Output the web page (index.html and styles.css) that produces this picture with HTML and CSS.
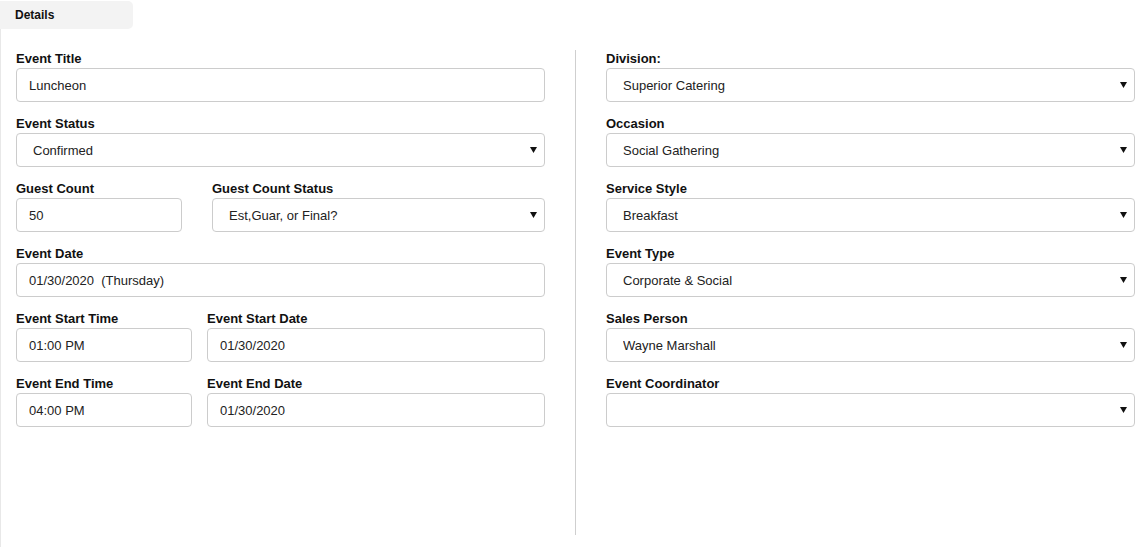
FILE: index.html
```html
<!DOCTYPE html>
<html lang="en">
<head>
<meta charset="utf-8">
<title>Event Details</title>
<link rel="stylesheet" href="styles.css">
</head>
<body>
<div class="tabs">
  <div class="tab">Details</div>
</div>
<div class="panel">
  <div class="col">
    <div class="field">
      <label class="lbl">Event Title</label>
      <input class="ctl" type="text" value="Luncheon">
    </div>
    <div class="field">
      <label class="lbl">Event Status</label>
      <div class="sel">
        <select class="ctl"><option>Confirmed</option></select>
        <svg class="caret" width="7" height="6" viewBox="0 0 7 6"><path d="M0 0H7L3.5 6Z"/></svg>
      </div>
    </div>
    <div class="field pair pair-guest">
      <div>
        <label class="lbl">Guest Count</label>
        <input class="ctl" type="text" value="50">
      </div>
      <div>
        <label class="lbl">Guest Count Status</label>
        <div class="sel">
          <select class="ctl"><option>Est,Guar, or Final?</option></select>
          <svg class="caret" width="7" height="6" viewBox="0 0 7 6"><path d="M0 0H7L3.5 6Z"/></svg>
        </div>
      </div>
    </div>
    <div class="field">
      <label class="lbl">Event Date</label>
      <input class="ctl" type="text" value="01/30/2020  (Thursday)">
    </div>
    <div class="field pair pair-time">
      <div>
        <label class="lbl">Event Start Time</label>
        <input class="ctl" type="text" value="01:00 PM">
      </div>
      <div>
        <label class="lbl">Event Start Date</label>
        <input class="ctl" type="text" value="01/30/2020">
      </div>
    </div>
    <div class="field pair pair-time">
      <div>
        <label class="lbl">Event End Time</label>
        <input class="ctl" type="text" value="04:00 PM">
      </div>
      <div>
        <label class="lbl">Event End Date</label>
        <input class="ctl" type="text" value="01/30/2020">
      </div>
    </div>
  </div>
  <div class="divider"></div>
  <div class="col">
    <div class="field">
      <label class="lbl">Division:</label>
      <div class="sel">
        <select class="ctl"><option>Superior Catering</option></select>
        <svg class="caret" width="7" height="6" viewBox="0 0 7 6"><path d="M0 0H7L3.5 6Z"/></svg>
      </div>
    </div>
    <div class="field">
      <label class="lbl">Occasion</label>
      <div class="sel">
        <select class="ctl"><option>Social Gathering</option></select>
        <svg class="caret" width="7" height="6" viewBox="0 0 7 6"><path d="M0 0H7L3.5 6Z"/></svg>
      </div>
    </div>
    <div class="field">
      <label class="lbl">Service Style</label>
      <div class="sel">
        <select class="ctl"><option>Breakfast</option></select>
        <svg class="caret" width="7" height="6" viewBox="0 0 7 6"><path d="M0 0H7L3.5 6Z"/></svg>
      </div>
    </div>
    <div class="field">
      <label class="lbl">Event Type</label>
      <div class="sel">
        <select class="ctl"><option>Corporate &amp; Social</option></select>
        <svg class="caret" width="7" height="6" viewBox="0 0 7 6"><path d="M0 0H7L3.5 6Z"/></svg>
      </div>
    </div>
    <div class="field">
      <label class="lbl">Sales Person</label>
      <div class="sel">
        <select class="ctl"><option>Wayne Marshall</option></select>
        <svg class="caret" width="7" height="6" viewBox="0 0 7 6"><path d="M0 0H7L3.5 6Z"/></svg>
      </div>
    </div>
    <div class="field">
      <label class="lbl">Event Coordinator</label>
      <div class="sel">
        <select class="ctl"><option></option></select>
        <svg class="caret" width="7" height="6" viewBox="0 0 7 6"><path d="M0 0H7L3.5 6Z"/></svg>
      </div>
    </div>
  </div>
</div>
</body>
</html>
```
FILE: styles.css
```css
* {
  box-sizing: border-box;
}

html, body {
  margin: 0;
  padding: 0;
  background: #fff;
  font-family: "Liberation Sans", Arial, sans-serif;
  color: #111;
}

.tabs {
  padding-top: 1px;
  height: 29px;
}

.tab {
  width: 133px;
  height: 28px;
  line-height: 28px;
  padding-left: 15px;
  background: #f3f3f3;
  border-radius: 0 5px 5px 0;
  font-size: 12px;
  font-weight: bold;
  color: #111;
}

.panel {
  display: flex;
  height: 518px;
  border-left: 1px solid #e8e8e8;
  padding: 21px 11px 12px 15px;
}

.col {
  width: 529px;
  flex: none;
}

.divider {
  width: 1px;
  margin: 0 30px;
  background: #cfcfcf;
}

.field {
  margin-bottom: 13px;
}

.pair {
  display: grid;
}

.pair-guest {
  grid-template-columns: 166px 1fr;
  column-gap: 30px;
}

.pair-time {
  grid-template-columns: 176px 1fr;
  column-gap: 15px;
}

.lbl {
  display: block;
  font-size: 13px;
  font-weight: bold;
  line-height: 16px;
  padding-top: 1px;
  margin-bottom: 1px;
  color: #111;
}

.ctl {
  display: block;
  width: 100%;
  height: 34px;
  margin: 0;
  border: 1px solid #cccccc;
  border-radius: 4px;
  padding: 0 12px;
  background: #fff;
  font-family: "Liberation Sans", Arial, sans-serif;
  font-size: 13px;
  color: #222;
  outline: none;
  white-space: pre;
}

.sel {
  position: relative;
}

.sel .ctl {
  appearance: none;
  -webkit-appearance: none;
  padding: 0 24px 0 16px;
}

.caret {
  position: absolute;
  right: 8px;
  top: 14px;
  fill: #111;
  pointer-events: none;
}
```
